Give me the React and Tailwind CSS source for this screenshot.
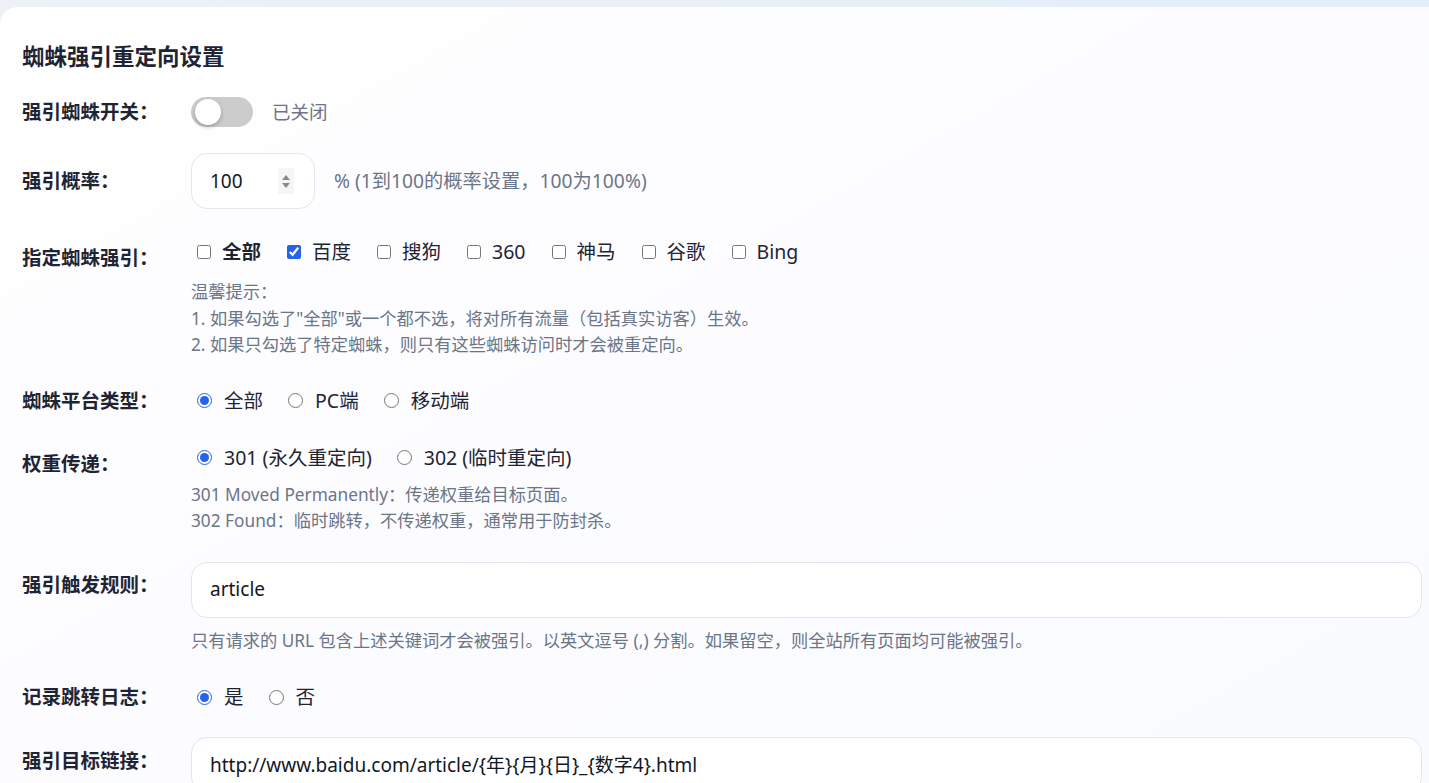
import React from "react";

const font = { fontFamily: '"Noto Sans", "Noto Sans CJK SC", sans-serif' };

const Label = ({ children, className = "" }) => (
  <div
    className={
      "w-[169px] shrink-0 text-[19.5px] font-bold text-[#1f2433] " + className
    }
  >
    {children}
  </div>
);

const Check = ({ label, checked, bold }) => (
  <label className="flex items-center mr-[20px]">
    <input
      type="checkbox"
      defaultChecked={checked}
      className="w-[14px] h-[14px] ml-[6px] mr-[11px] accent-[#2563eb]"
    />
    <span className={"text-[19.5px] text-[#1f2433] " + (bold ? "font-bold" : "")}>
      {label}
    </span>
  </label>
);

const Radio = ({ name, label, checked }) => (
  <label className="flex items-center mr-[19px]">
    <input
      type="radio"
      name={name}
      defaultChecked={checked}
      className="w-[15px] h-[15px] ml-[6px] mr-[12px] accent-[#2563eb]"
    />
    <span className="text-[19.5px] text-[#1f2433]">{label}</span>
  </label>
);

const Hint = ({ children, className = "" }) => (
  <div className={"text-[17.25px] leading-[26.5px] text-[#6b7588] " + className}>
    {children}
  </div>
);

export default function App() {
  return (
    <div
      style={font}
      className="min-h-[783px] bg-gradient-to-r from-[#eef1f8] to-[#e2eef9] pt-[7px] overflow-hidden"
    >
      <div className="rounded-tl-[18px] bg-gradient-to-br from-[#ffffff] via-[#fcfcff] to-[#f8fbfe] pl-[22px] pr-[7px] pt-[35px] pb-[20px] min-h-[776px]">
        <h2 className="text-[22.5px] font-bold text-[#1f2433] leading-[30px]">
          蜘蛛强引重定向设置
        </h2>

        <div className="mt-[25px] flex flex-col">
          {/* switch */}
          <div className="flex items-center h-[30px]">
            <Label>强引蜘蛛开关：</Label>
            <div className="flex items-center">
              <div className="w-[62px] h-[30px] rounded-full bg-[#cccccc] flex items-center px-[4px]">
                <div className="w-[26px] h-[26px] rounded-full bg-white shadow-[0_2px_4px_rgba(0,0,0,0.25)]" />
              </div>
              <span className="ml-[19px] text-[18.5px] text-[#6b7588]">已关闭</span>
            </div>
          </div>

          {/* rate */}
          <div className="flex items-center mt-[26px]">
            <Label>强引概率：</Label>
            <div className="w-[124px] h-[56px] rounded-[16px] border border-[#e3e6ec] bg-white flex items-center pl-[18px] pr-[20px]">
              <span className="flex-1 text-[19px] text-[#111827]">100</span>
              <span className="w-[16px] h-[26px] bg-[#f6f6f6] flex flex-col items-center justify-center gap-[3px]">
                <svg width="8" height="5" viewBox="0 0 8 5">
                  <path d="M4 0L8 5H0z" fill="#8a8a8a" />
                </svg>
                <svg width="8" height="5" viewBox="0 0 8 5">
                  <path d="M0 0h8L4 5z" fill="#8a8a8a" />
                </svg>
              </span>
            </div>
            <span className="ml-[19px] text-[19.25px] text-[#6b7588]">
              % (1到100的概率设置，100为100%)
            </span>
          </div>

          {/* spiders */}
          <div className="flex items-start mt-[28px]">
            <Label className="leading-[30px] mt-[6px]">指定蜘蛛强引：</Label>
            <div className="flex flex-col">
              <div className="flex items-center h-[30px]">
                <Check label="全部" bold />
                <Check label="百度" checked />
                <Check label="搜狗" />
                <Check label="360" />
                <Check label="神马" />
                <Check label="谷歌" />
                <Check label="Bing" />
              </div>
              <Hint className="mt-[12px]">
                <div>温馨提示：</div>
                <div>1. 如果勾选了"全部"或一个都不选，将对所有流量（包括真实访客）生效。</div>
                <div>2. 如果只勾选了特定蜘蛛，则只有这些蜘蛛访问时才会被重定向。</div>
              </Hint>
            </div>
          </div>

          {/* platform */}
          <div className="flex items-center h-[30px] mt-[27px]">
            <Label>蜘蛛平台类型：</Label>
            <div className="flex items-center">
              <Radio name="platform" label="全部" checked />
              <Radio name="platform" label="PC端" />
              <Radio name="platform" label="移动端" />
            </div>
          </div>

          {/* weight */}
          <div className="flex items-start mt-[27px]">
            <Label className="leading-[30px] mt-[6px]">权重传递：</Label>
            <div className="flex flex-col">
              <div className="flex items-center h-[30px]">
                <Radio name="weight" label="301 (永久重定向)" checked />
                <Radio name="weight" label="302 (临时重定向)" />
              </div>
              <Hint className="mt-[9px]">
                <div>301 Moved Permanently：传递权重给目标页面。</div>
                <div>302 Found：临时跳转，不传递权重，通常用于防封杀。</div>
              </Hint>
            </div>
          </div>

          {/* rule */}
          <div className="flex items-start mt-[27px]">
            <Label className="leading-[30px] mt-[8px]">强引触发规则：</Label>
            <div className="flex-1 flex flex-col">
              <div className="h-[56px] rounded-[16px] border border-[#e3e6ec] bg-white flex items-center px-[18px] text-[19px] text-[#111827]">
                article
              </div>
              <Hint className="mt-[10px]">
                只有请求的 URL 包含上述关键词才会被强引。以英文逗号 (,) 分割。如果留空，则全站所有页面均可能被强引。
              </Hint>
            </div>
          </div>

          {/* log */}
          <div className="flex items-center h-[30px] mt-[28px]">
            <Label>记录跳转日志：</Label>
            <div className="flex items-center">
              <Radio name="log" label="是" checked />
              <Radio name="log" label="否" />
            </div>
          </div>

          {/* target */}
          <div className="flex items-start mt-[25px]">
            <Label className="leading-[30px] mt-[9px]">强引目标链接：</Label>
            <div className="flex-1 h-[56px] rounded-[16px] border border-[#e3e6ec] bg-white flex items-center px-[18px] text-[19px] text-[#111827]">
              {"http://www.baidu.com/article/{年}{月}{日}_{数字4}.html"}
            </div>
          </div>
        </div>
      </div>
    </div>
  );
}
